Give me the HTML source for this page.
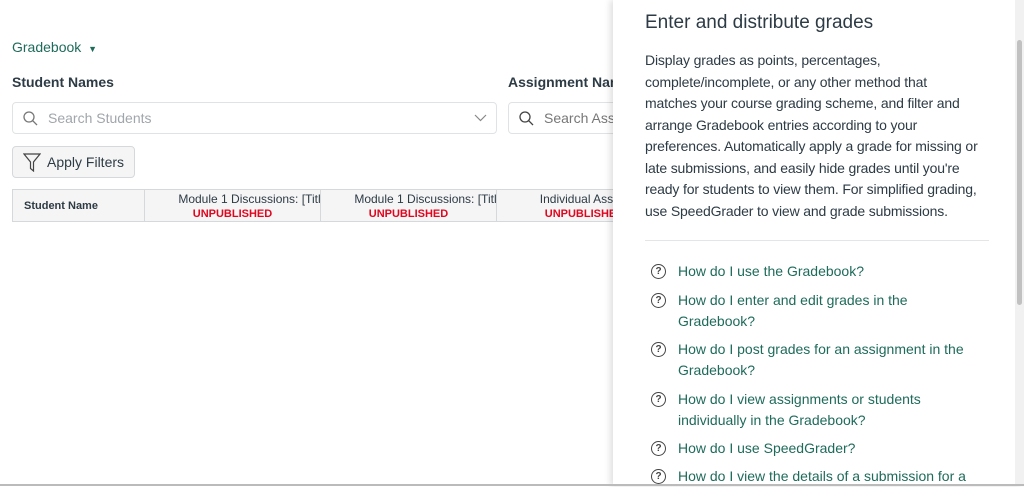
<!DOCTYPE html><html><head><style>
body{margin:0;width:1024px;height:486px;overflow:hidden;background:#fff;font-family:"Liberation Sans",sans-serif;color:#2d3b45;position:relative}
.a{position:absolute}
.inp{border:1px solid #e0e3e6;border-radius:4px;height:32px;box-sizing:border-box;background:#fff}
.ph{color:#a0a6ab;font-size:14px}
.col{position:absolute;top:189px;height:33px;border-right:1px solid #d6d9dc;background:#f5f5f5;box-sizing:border-box;text-align:center;font-size:12px;overflow:hidden;white-space:nowrap}
.un{color:#e0061f;font-weight:bold;font-size:11px}
.lk{position:absolute;left:678px;color:#1e6b5a;font-size:14px;line-height:21px;width:300px}
.q{position:absolute;left:651px;width:13px;height:13px;border:1.3px solid #444;border-radius:50%;font-size:10px;line-height:13px;text-align:center;color:#444;font-weight:bold}
</style></head><body>
<div class="a" style="left:12px;top:39px;color:#1e6b5a;font-size:14px">Gradebook <span style="font-size:9px;margin-left:3px">▼</span></div>
<div class="a" style="left:12px;top:74px;font-weight:bold;font-size:14px">Student Names</div>
<div class="a" style="left:508px;top:74px;font-weight:bold;font-size:14px">Assignment Names</div>
<div class="a inp" style="left:12px;top:102px;width:485px"><svg class="a" style="left:10px;top:8px" width="15" height="15" viewBox="0 0 15 15" fill="none" stroke="#777" stroke-width="1.3"><circle cx="6" cy="6" r="5"/><path d="M9.7 9.7L14 14"/></svg><span class="a ph" style="left:35px;top:7px">Search Students</span><svg class="a" style="left:461px;top:11px" width="13" height="8" viewBox="0 0 13 8" fill="none" stroke="#888" stroke-width="1.2"><path d="M1 1l5.5 5.5L12 1"/></svg></div>
<div class="a inp" style="left:508px;top:102px;width:200px"><svg class="a" style="left:10px;top:8px" width="15" height="15" viewBox="0 0 15 15" fill="none" stroke="#444" stroke-width="1.3"><circle cx="6" cy="6" r="5"/><path d="M9.7 9.7L14 14"/></svg><span class="a" style="left:35px;top:7px;font-size:14px;color:#777">Search Assignments</span></div>
<div class="a" style="left:12px;top:146px;width:123px;height:32px;box-sizing:border-box;border:1px solid #d6d9dc;border-radius:4px;background:#f5f5f5"><svg class="a" style="left:10px;top:6px" width="18" height="19" viewBox="0 0 18 19" fill="none" stroke="#444" stroke-width="1.2"><path d="M1 1h16l-6.5 8v9l-3-2.5V9z"/></svg><span class="a" style="left:34px;top:7px;font-size:14px">Apply Filters</span></div>
<div class="a" style="left:12px;top:189px;width:600px;height:33px;border-top:1px solid #d6d9dc;border-bottom:1px solid #d6d9dc;box-sizing:border-box;background:#f5f5f5"></div>
<div class="col" style="left:12px;width:133px;text-align:left;padding:10px 0 0 11px;font-weight:bold;font-size:11px;border-left:1px solid #d6d9dc;border-top:1px solid #d6d9dc;border-bottom:1px solid #d6d9dc">Student Name</div>
<div class="col" style="left:145px;width:176px;padding-top:2px;border-top:1px solid #d6d9dc;border-bottom:1px solid #d6d9dc">&nbsp;&nbsp;&nbsp;&nbsp;&nbsp;&nbsp;&nbsp;&nbsp;&nbsp;&nbsp;Module 1 Discussions: [Title]<br><span class="un">UNPUBLISHED</span></div>
<div class="col" style="left:321px;width:176px;padding-top:2px;border-top:1px solid #d6d9dc;border-bottom:1px solid #d6d9dc">&nbsp;&nbsp;&nbsp;&nbsp;&nbsp;&nbsp;&nbsp;&nbsp;&nbsp;&nbsp;Module 1 Discussions: [Title]<br><span class="un">UNPUBLISHED</span></div>
<div class="col" style="left:497px;width:176px;padding-top:2px;border-top:1px solid #d6d9dc;border-bottom:1px solid #d6d9dc">&nbsp;&nbsp;&nbsp;&nbsp;&nbsp;&nbsp;&nbsp;&nbsp;Individual Assignment<br><span class="un">UNPUBLISHED</span></div>
<div class="a" style="left:613px;top:0;width:411px;height:486px;background:#fff;box-shadow:-3px 0 6px rgba(0,0,0,.12)"></div>
<div class="a" style="left:1015px;top:0;width:9px;height:486px;background:#f1f1f1"></div>
<div class="a" style="left:1017px;top:40px;width:5px;height:265px;background:#c1c1c1;border-radius:3px"></div>
<div class="a" style="left:645px;top:12px;font-size:19px;color:#2d3b45">Enter and distribute grades</div>
<div class="a" style="left:645px;top:50px;width:350px;font-size:14px;line-height:21.5px;letter-spacing:-0.15px">Display grades as points, percentages,<br>complete/incomplete, or any other method that<br>matches your course grading scheme, and filter and<br>arrange Gradebook entries according to your<br>preferences. Automatically apply a grade for missing or<br>late submissions, and easily hide grades until you're<br>ready for students to view them. For simplified grading,<br>use SpeedGrader to view and grade submissions.</div>
<div class="a" style="left:645px;top:240px;width:344px;height:1px;background:#e3e5e7"></div>
<div class="q" style="top:264px">?</div><div class="lk" style="top:261px">How do I use the Gradebook?</div>
<div class="q" style="top:293px">?</div><div class="lk" style="top:290px">How do I enter and edit grades in the<br>Gradebook?</div>
<div class="q" style="top:342px">?</div><div class="lk" style="top:339px">How do I post grades for an assignment in the<br>Gradebook?</div>
<div class="q" style="top:392px">?</div><div class="lk" style="top:389px">How do I view assignments or students<br>individually in the Gradebook?</div>
<div class="q" style="top:441px">?</div><div class="lk" style="top:438px">How do I use SpeedGrader?</div>
<div class="q" style="top:469px">?</div><div class="lk" style="top:466px;white-space:nowrap">How do I view the details of a submission for a</div>
<div class="a" style="left:0;top:484px;width:1024px;height:2px;background:#bbb"></div>
</body></html>
